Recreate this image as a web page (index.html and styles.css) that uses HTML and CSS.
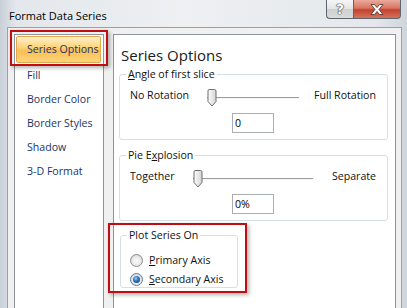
FILE: index.html
```html
<!DOCTYPE html>
<html lang="en">
<head>
<meta charset="UTF-8">
<title>Format Data Series</title>
<link rel="stylesheet" href="styles.css">
</head>
<body>
<div class="window">
  <div class="titlebar">
    <span class="title">Format Data Series</span>
    <div class="caption-buttons">
      <span class="cap-btn help">?</span>
      <span class="cap-btn close">
        <svg width="14" height="11" viewBox="0 0 14 11"><path d="M1 0.5h3.5l2.5 3 2.5-3h3.5l-4 5 4 5h-3.5l-2.5-3-2.5 3h-3.5l4-5z" fill="#fff" stroke="#4a2a26" stroke-width="0.8" stroke-linejoin="round"/></svg>
      </span>
    </div>
  </div>
  <div class="client">
    <ul class="nav">
      <li class="nav-item selected">Series Options</li>
      <li class="nav-item">Fill</li>
      <li class="nav-item">Border Color</li>
      <li class="nav-item">Border Styles</li>
      <li class="nav-item">Shadow</li>
      <li class="nav-item">3-D Format</li>
    </ul>
    <div class="panel">
      <h2 class="panel-title">Series Options</h2>

      <fieldset class="group">
        <legend><u>A</u>ngle of first slice</legend>
        <div class="group-body">
          <div class="slider-row angle">
            <span>No Rotation</span>
            <div class="slider">
              <svg class="thumb" width="10" height="18" viewBox="0 0 10 18"><defs><linearGradient id="tg1" x1="0" y1="0" x2="1" y2="0"><stop offset="0" stop-color="#fdfdfd"/><stop offset="1" stop-color="#d4d4d4"/></linearGradient></defs><path d="M2 0.5h5.5a1.5 1.5 0 0 1 1.5 1.5v10.5l-4 4.5l-4-4.5v-10.5a1.5 1.5 0 0 1 1-1.5z" fill="url(#tg1)" stroke="#6f6f6f"/></svg>
            </div>
            <span class="right">Full Rotation</span>
          </div>
          <div class="value-row"><input class="value" type="text" value="0" readonly></div>
        </div>
      </fieldset>

      <fieldset class="group second">
        <legend>Pie E<u>x</u>plosion</legend>
        <div class="group-body">
          <div class="slider-row explode">
            <span>Together</span>
            <div class="slider">
              <svg class="thumb" width="10" height="18" viewBox="0 0 10 18"><defs><linearGradient id="tg2" x1="0" y1="0" x2="1" y2="0"><stop offset="0" stop-color="#fdfdfd"/><stop offset="1" stop-color="#d4d4d4"/></linearGradient></defs><path d="M2 0.5h5.5a1.5 1.5 0 0 1 1.5 1.5v10.5l-4 4.5l-4-4.5v-10.5a1.5 1.5 0 0 1 1-1.5z" fill="url(#tg2)" stroke="#6f6f6f"/></svg>
            </div>
            <span class="right">Separate</span>
          </div>
          <div class="value-row"><input class="value" type="text" value="0%" readonly></div>
        </div>
      </fieldset>

      <div class="callout">
        <fieldset class="group plot">
          <legend>Plot Series On</legend>
          <div class="group-body radios">
            <label class="radio-row">
              <svg width="13" height="13" viewBox="0 0 13 13"><defs><radialGradient id="rg1" cx="0.5" cy="0.55" r="0.6"><stop offset="0" stop-color="#fafafa"/><stop offset="0.6" stop-color="#e9e9e9"/><stop offset="1" stop-color="#c9c9c9"/></radialGradient></defs><circle cx="6.5" cy="6.5" r="6" fill="url(#rg1)" stroke="#8e8f8f"/></svg>
              <span><u>P</u>rimary Axis</span>
            </label>
            <label class="radio-row">
              <svg width="13" height="13" viewBox="0 0 13 13"><defs><radialGradient id="rg2" cx="0.5" cy="0.55" r="0.6"><stop offset="0" stop-color="#fafafa"/><stop offset="0.6" stop-color="#e9e9e9"/><stop offset="1" stop-color="#c9c9c9"/></radialGradient><radialGradient id="dot" cx="0.4" cy="0.35" r="0.7"><stop offset="0" stop-color="#9fd0f5"/><stop offset="0.5" stop-color="#3178c0"/><stop offset="1" stop-color="#1a4a88"/></radialGradient></defs><circle cx="6.5" cy="6.5" r="6" fill="url(#rg2)" stroke="#5a7ea6"/><circle cx="6.5" cy="6.5" r="3.5" fill="url(#dot)"/></svg>
              <span><u>S</u>econdary Axis</span>
            </label>
          </div>
        </fieldset>
      </div>
    </div>
  </div>
</div>
</body>
</html>
```

FILE: styles.css
```css
html, body {
  margin: 0;
  height: 100%;
}
body {
  font-family: 'Open Sans', 'Noto Sans', Arial, sans-serif;
  font-size: 10.6px;
  color: #111;
  background: linear-gradient(to right, #c9d0d8, #e3e7eb 4%, #eef0f2 45%, #e4e8ec 92%, #cfd5dc);
  overflow: hidden;
}
.window {
  width: 407px;
  height: 308px;
  display: flex;
  flex-direction: column;
}
.titlebar {
  height: 27px;
  display: flex;
  align-items: flex-start;
  flex-shrink: 0;
}
.title {
  margin: 8px 0 0 9px;
  line-height: 15px;
  font-size: 11px;
  color: #000;
}
.caption-buttons {
  margin-left: auto;
  margin-right: 6px;
  display: flex;
}
.cap-btn {
  height: 18px;
  display: flex;
  align-items: center;
  justify-content: center;
  border: 1px solid #5d646c;
  border-top: none;
}
.help {
  width: 26px;
  border-right: none;
  border-bottom-left-radius: 4px;
  background: linear-gradient(#f6f6f6, #e4e4e4 48%, #cfd0d1 52%, #d9dadb);
  color: #fff;
  font-weight: bold;
  font-size: 14px;
  font-family: 'DejaVu Sans', sans-serif;
  text-shadow: 0 0 1px #333, 0 0 1px #333, 0 0 1px #333;
}
.close {
  width: 46px;
  border-bottom-right-radius: 4px;
  background: linear-gradient(#e9aa9d, #d87560 45%, #c4412d 55%, #d2745f);
}
.client {
  flex: 1;
  margin: 0 5px 0 7px;
  background: #f0f0f0;
  border: 1px solid #9aa1a9;
  border-bottom: none;
  display: flex;
  gap: 9px;
  padding: 6px 5px 0 6px;
  min-height: 0;
}
.nav {
  width: 88px;
  margin: 0;
  padding: 0;
  list-style: none;
  background: #fff;
  border: 1px solid #8e9399;
  border-bottom: none;
}
.nav-item {
  height: 24px;
  line-height: 24px;
  padding-left: 12px;
  color: #1c3468;
  white-space: nowrap;
}
.nav-item.selected {
  position: relative;
  height: 25px;
  line-height: 25px;
  margin: 1px 2px 0 1px;
  padding-left: 10px;
  border: 1px solid #e2a650;
  border-radius: 2px;
  background: linear-gradient(#fff0c6, #fdd57f 40%, #fbbf52 55%, #fcd47c);
}
.nav-item.selected::after {
  content: "";
  position: absolute;
  top: -7px;
  left: -7px;
  right: -8px;
  bottom: -4px;
  border: 2px solid #c00d12;
  box-shadow: 2px 2px 4px rgba(0, 0, 0, 0.3);
}
.panel {
  flex: 1;
  background: #fff;
  border: 1px solid #8e9399;
  border-bottom: none;
  padding: 0 7px 0 5px;
}
.panel-title {
  margin: 10px 0 0 2px;
  font-size: 15px;
  font-weight: normal;
  line-height: 20px;
  color: #1a1a1a;
}
.group {
  margin: 2px 0 0 0;
  padding: 0;
  border: 1px solid #d5dfe5;
  border-radius: 3px;
}
.group legend {
  margin-left: 6px;
  padding: 0 2px;
  line-height: 14px;
}
.group.second {
  margin-top: 8px;
}
.group-body {
  padding: 2px 11px 6px 10px;
}
.slider-row {
  display: grid;
  height: 22px;
  align-items: center;
}
.slider-row.angle {
  grid-template-columns: 77px 92px 1fr;
}
.slider-row.explode {
  grid-template-columns: 63px 120px 1fr;
}
.slider {
  align-self: stretch;
  padding-top: 6px;
  box-sizing: border-box;
  background:
    linear-gradient(#9c9c9c, #9c9c9c) no-repeat 0 14px / 100% 1px,
    linear-gradient(#f4f4f4, #f4f4f4) no-repeat 0 15px / 100% 1px;
}
.thumb {
  display: block;
}
.right {
  text-align: right;
}
.value-row {
  display: flex;
  justify-content: center;
  margin-top: 8px;
}
.value {
  width: 42px;
  height: 20px;
  box-sizing: border-box;
  border: 1px solid #a9adb4;
  padding: 0 2px;
  font: inherit;
  color: #000;
  outline: none;
}
.callout {
  width: fit-content;
  margin: 2px 0 0 -11px;
  padding: 3px 7px 3px 10px;
  border: 2px solid #c00d12;
  box-shadow: 2px 2px 4px rgba(0, 0, 0, 0.3);
}
.group.plot {
  width: 118px;
  box-sizing: border-box;
  margin: 0;
}
.radios {
  padding: 10px 0 0 9px;
}
.radio-row {
  display: flex;
  align-items: center;
  gap: 6px;
  height: 16px;
}
.radio-row + .radio-row {
  margin-top: 3px;
}
.radio-row svg {
  display: block;
}
```
